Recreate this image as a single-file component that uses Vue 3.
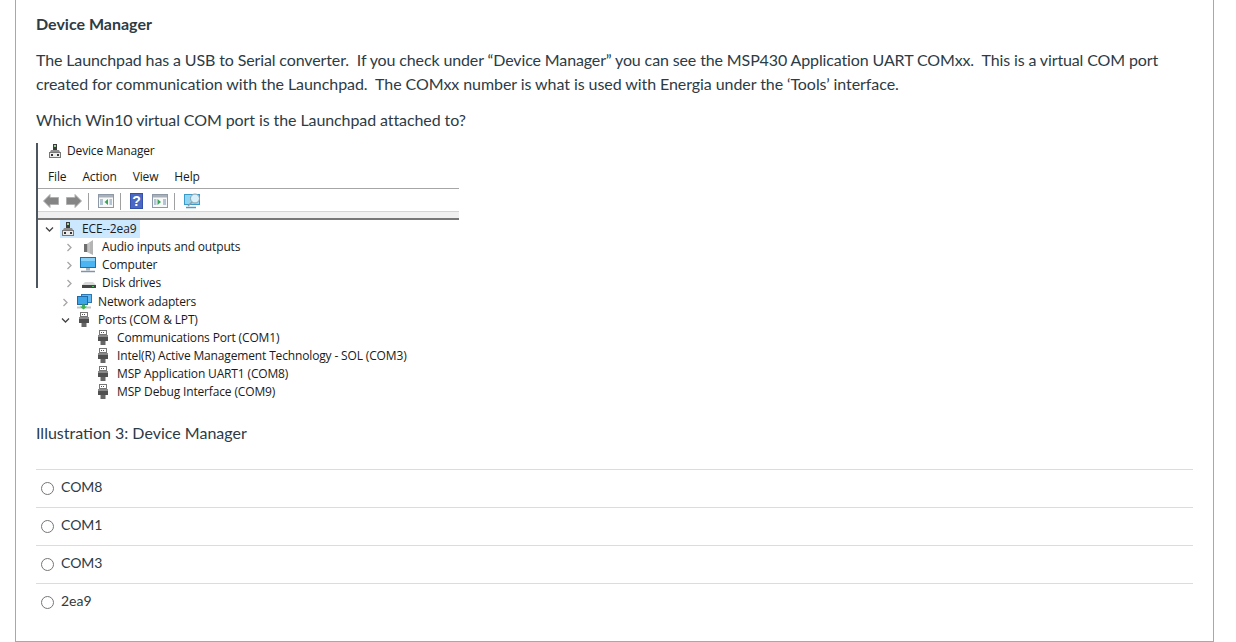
<script setup>
const tree = [
  { label: 'Audio inputs and outputs', icon: 'audio', arrow: 'right', level: 'sub' },
  { label: 'Computer', icon: 'computer', arrow: 'right', level: 'sub' },
  { label: 'Disk drives', icon: 'disk', arrow: 'right', level: 'sub' },
  { label: 'Network adapters', icon: 'network', arrow: 'right', level: 'top gapped' },
  { label: 'Ports (COM & LPT)', icon: 'port', arrow: 'down', level: 'top' },
  { label: 'Communications Port (COM1)', icon: 'port', level: 'child' },
  { label: 'Intel(R) Active Management Technology - SOL (COM3)', icon: 'port', level: 'child' },
  { label: 'MSP Application UART1 (COM8)', icon: 'port', level: 'child' },
  { label: 'MSP Debug Interface (COM9)', icon: 'port', level: 'child' }
]

const answers = ['COM8', 'COM1', 'COM3', '2ea9']
</script>

<template>
  <div class="card">
    <h3 class="title">Device Manager</h3>
    <p class="para">
      <span class="line1">The Launchpad has a USB to Serial converter.&nbsp; If you check under “Device Manager” you can see the MSP430 Application UART COMxx.&nbsp; This is a virtual COM port</span><br />
      <span class="line2">created for communication with the Launchpad.&nbsp; The COMxx number is what is used with Energia under the ‘Tools’ interface.</span>
    </p>
    <p class="para line3">Which Win10 virtual COM port is the Launchpad attached to?</p>

    <!-- screenshot of device manager -->
    <div class="devmgr">
      <div class="dm-title">
        <svg width="16" height="16" viewBox="0 0 16 16">
          <rect x="6" y="1" width="4" height="6" fill="#3c3c3c" />
          <rect x="7" y="2" width="2" height="2" fill="#9ad29a" />
          <path d="M4 7h8l1 2H3z" fill="#8f8f8f" />
          <rect x="2.500" y="9.500" width="11" height="5" fill="#ececec" stroke="#777" />
          <rect x="4" y="11" width="2" height="2" fill="#333" />
          <rect x="10" y="11" width="2" height="2" fill="#333" />
        </svg>
        <span>Device Manager</span>
      </div>
      <div class="dm-menu">
        <span>File</span><span>Action</span><span>View</span><span>Help</span>
      </div>
      <div class="dm-toolbar">
        <svg width="16" height="14" viewBox="0 0 16 14"><path d="M0.500 7L7 0.500V3.500h8.500v7H7v3z" fill="#858585" stroke="#b0b0b0" /></svg>
        <svg class="fwd" width="16" height="14" viewBox="0 0 16 14"><path d="M15.500 7L9 0.500V3.500H0.500v7H9v3z" fill="#858585" stroke="#b0b0b0" /></svg>
        <i class="sep"></i>
        <svg width="16" height="14" viewBox="0 0 16 14">
          <rect x="0.500" y="0.500" width="15" height="13" fill="#f8f8f8" stroke="#8d99a6" />
          <rect x="1" y="1" width="14" height="2.500" fill="#a9b0b8" />
          <path d="M10 5v6L6.500 8z" fill="#3aa655" />
          <path d="M2 6h3M2 8h3M2 10h3M11.500 6h2.500M11.500 8h2.500M11.500 10h2.500" stroke="#6f8fb0" />
        </svg>
        <i class="sep"></i>
        <svg width="13" height="16" viewBox="0 0 13 16">
          <rect width="13" height="16" fill="#3350ad" />
          <rect x="1" y="1" width="11" height="14" fill="#4a68c4" />
          <text x="6.500" y="13" text-anchor="middle" font-family="Liberation Sans, sans-serif" font-size="14" font-weight="700" fill="#fff">?</text>
        </svg>
        <svg class="gap" width="16" height="14" viewBox="0 0 16 14">
          <rect x="0.500" y="0.500" width="15" height="13" fill="#f8f8f8" stroke="#8d99a6" />
          <rect x="1" y="1" width="14" height="2.500" fill="#a9b0b8" />
          <path d="M5.500 5v6L9 8z" fill="#3aa655" />
          <path d="M2 6h2.500M2 8h2.500M2 10h2.500M11 6h3M11 8h3M11 10h3" stroke="#6f8fb0" />
        </svg>
        <i class="sep"></i>
        <svg width="17" height="16" viewBox="0 0 17 16">
          <rect x="0.500" y="1.500" width="15" height="10" fill="#8fd6f4" stroke="#3a9bc9" />
          <path d="M2 14.500h10" stroke="#4a9fc9" stroke-width="1.500" />
          <circle cx="11" cy="5.500" r="4.500" fill="#d8f0fa" stroke="#8aa0ac" />
          <path d="M8 9L4 13" stroke="#9a9a9a" stroke-width="1.500" />
        </svg>
      </div>
      <div class="dm-band"></div>

      <div class="row root">
        <svg class="arrow" width="9" height="9" viewBox="0 0 9 9"><path d="M1 2.500l3.500 3.500L8 2.500" fill="none" stroke="#444" stroke-width="1.300" /></svg>
        <span class="root-sel">
          <svg width="16" height="16" viewBox="0 0 16 16">
            <rect x="6" y="1" width="4" height="6" fill="#3c3c3c" />
            <rect x="7" y="2" width="2" height="2" fill="#9ad29a" />
            <path d="M4 7h8l1 2H3z" fill="#8f8f8f" />
            <rect x="2.500" y="9.500" width="11" height="5" fill="#ececec" stroke="#777" />
            <rect x="4" y="11" width="2" height="2" fill="#333" />
            <rect x="10" y="11" width="2" height="2" fill="#333" />
          </svg>
          <span>ECE--2ea9</span>
        </span>
      </div>

      <div v-for="item in tree" :key="item.label" class="row" :class="item.level">
        <span class="arrow-box">
          <svg v-if="item.arrow === 'right'" width="9" height="9" viewBox="0 0 9 9"><path d="M2.500 1L6 4.500 2.500 8" fill="none" stroke="#a6a6a6" stroke-width="1.300" /></svg>
          <svg v-if="item.arrow === 'down'" width="9" height="9" viewBox="0 0 9 9"><path d="M1 2.500l3.500 3.500L8 2.500" fill="none" stroke="#444" stroke-width="1.300" /></svg>
        </span>
        <svg class="tree-ico" width="16" height="16" viewBox="0 0 16 16">
          <template v-if="item.icon === 'audio'">
            <rect x="4" y="5" width="3" height="8" fill="#6f6f6f" />
            <path d="M7 5l6-4v15l-6-3z" fill="#b4b4b4" />
            <path d="M9 4v10" stroke="#d4d4d4" />
          </template>
          <template v-if="item.icon === 'computer'">
            <rect x="0.500" y="0.500" width="15" height="10" fill="#4db4f2" stroke="#1f6fa8" />
            <rect x="1" y="1" width="14" height="3" fill="#86d0f7" />
            <path d="M6 11h4v2.500H6z" fill="#aab4bc" />
            <path d="M1 14.500h14" stroke="#7d95a8" stroke-width="1.500" />
          </template>
          <template v-if="item.icon === 'disk'">
            <path d="M5 7h8l3 3H2z" fill="#d8d8d8" />
            <rect x="2" y="10" width="14" height="3" fill="#454545" />
            <rect x="12" y="11" width="2" height="1" fill="#46c35a" />
          </template>
          <template v-if="item.icon === 'network'">
            <rect x="5.500" y="0.500" width="10" height="8" fill="#62b8ee" stroke="#2a78b8" />
            <rect x="1.500" y="2.500" width="10" height="8" fill="#3ea4e8" stroke="#1f6aa8" />
            <path d="M1 13.500h14" stroke="#c4c4c4" stroke-width="2" />
            <path d="M6 10.500h3v2h2l-3.500 3-3.500-3h2z" fill="#3fb24f" />
          </template>
          <template v-if="item.icon === 'port'">
            <rect x="4.500" y="0.500" width="7" height="4" fill="#fff" stroke="#777" />
            <path d="M6 2.500h1M8 2.500h1" stroke="#555" />
            <rect x="3" y="5" width="10" height="6" fill="#505050" />
            <rect x="3" y="5" width="10" height="2" fill="#8a8a8a" />
            <rect x="5.500" y="11" width="5" height="4" fill="#666" />
          </template>
        </svg>
        <span>{{ item.label }}</span>
      </div>
    </div>

    <p class="caption">Illustration 3: Device Manager</p>

    <div class="answers">
      <label v-for="a in answers" :key="a" class="answer">
        <span class="radio"></span>
        <span class="answer-text">{{ a }}</span>
      </label>
    </div>
  </div>
</template>

<style>
html, body {
  margin: 0;
  background: #fff;
}
</style>

<style scoped>
.card {
  box-sizing: border-box;
  width: 1199px;
  height: 642px;
  margin-left: 15px;
  padding: 12px 20px 0;
  border: 1px solid #a8a8a8;
  border-top: none;
  font-family: Lato, "Liberation Sans", sans-serif;
  font-size: 16px;
  line-height: 24px;
  color: #2d3b45;
  overflow: hidden;
}

.title {
  margin: 0 0 12px;
  font-size: 16px;
  font-weight: 700;
  line-height: 24px;
}

.para {
  margin: 0 0 12px;
}

.line1 {
  letter-spacing: -0.125px;
}

.line2 {
  letter-spacing: -0.07px;
}

.line3 {
  letter-spacing: -0.09px;
}

.devmgr {
  position: relative;
  width: 423px;
  height: 259px;
  margin-top: -2px;
  font-family: "Open Sans", "Noto Sans", sans-serif;
  font-size: 12px;
  line-height: 18px;
  letter-spacing: -0.15px;
  color: #1a1a1a;
}

/* dark edge of the cropped window */
.devmgr::before {
  content: "";
  position: absolute;
  left: 0;
  top: 1px;
  width: 2px;
  height: 145px;
  background: #4b5661;
}

.dm-title {
  display: flex;
  align-items: center;
  gap: 4px;
  height: 18px;
  padding-left: 11px;
}

.dm-menu {
  box-sizing: border-box;
  display: flex;
  gap: 16px;
  height: 29px;
  padding: 8px 0 0 12px;
  border-bottom: 1px solid #a6a6a6;
}

.dm-toolbar {
  box-sizing: border-box;
  display: flex;
  align-items: center;
  height: 22px;
  padding: 2px 0 0 7px;
}

.dm-toolbar svg {
  flex: none;
}

.fwd {
  margin-left: 7px;
}

.sep {
  flex: none;
  width: 1px;
  height: 17px;
  margin: 0 9px 0 6px;
  background: #a0a0a0;
}

.gap {
  margin-left: 9px;
}

.dm-band {
  box-sizing: border-box;
  height: 9px;
  background: #f0f0f0;
  border-top: 1px solid #d4d4d4;
  border-bottom: 2px solid #777;
}

.row {
  display: flex;
  align-items: center;
  height: 18px;
}

.root {
  padding-left: 9px;
}

.arrow {
  margin-right: 6px;
}

.root-sel {
  display: flex;
  align-items: center;
  gap: 6px;
  height: 18px;
  padding: 0 4px 0 0;
  background: #cce8ff;
}

.arrow-box {
  display: flex;
  width: 15px;
  flex: none;
}

.tree-ico {
  flex: none;
  margin-right: 6px;
}

.sub {
  padding-left: 29px;
}

.top {
  padding-left: 25px;
}

.gapped {
  margin-top: 1px;
}

.child {
  padding-left: 44px;
}

.caption {
  margin: 20px 0 0;
}

.answers {
  margin-top: 24px;
}

.answer {
  display: flex;
  align-items: center;
  gap: 7px;
  height: 37px;
  padding-left: 5px;
  border-top: 1px solid #dcdcdc;
  font-size: 14px;
}

.answer-text {
  margin-bottom: 3px;
}

.radio {
  box-sizing: border-box;
  width: 13px;
  height: 13px;
  border: 1px solid #767676;
  border-radius: 50%;
  background: #fff;
}
</style>
